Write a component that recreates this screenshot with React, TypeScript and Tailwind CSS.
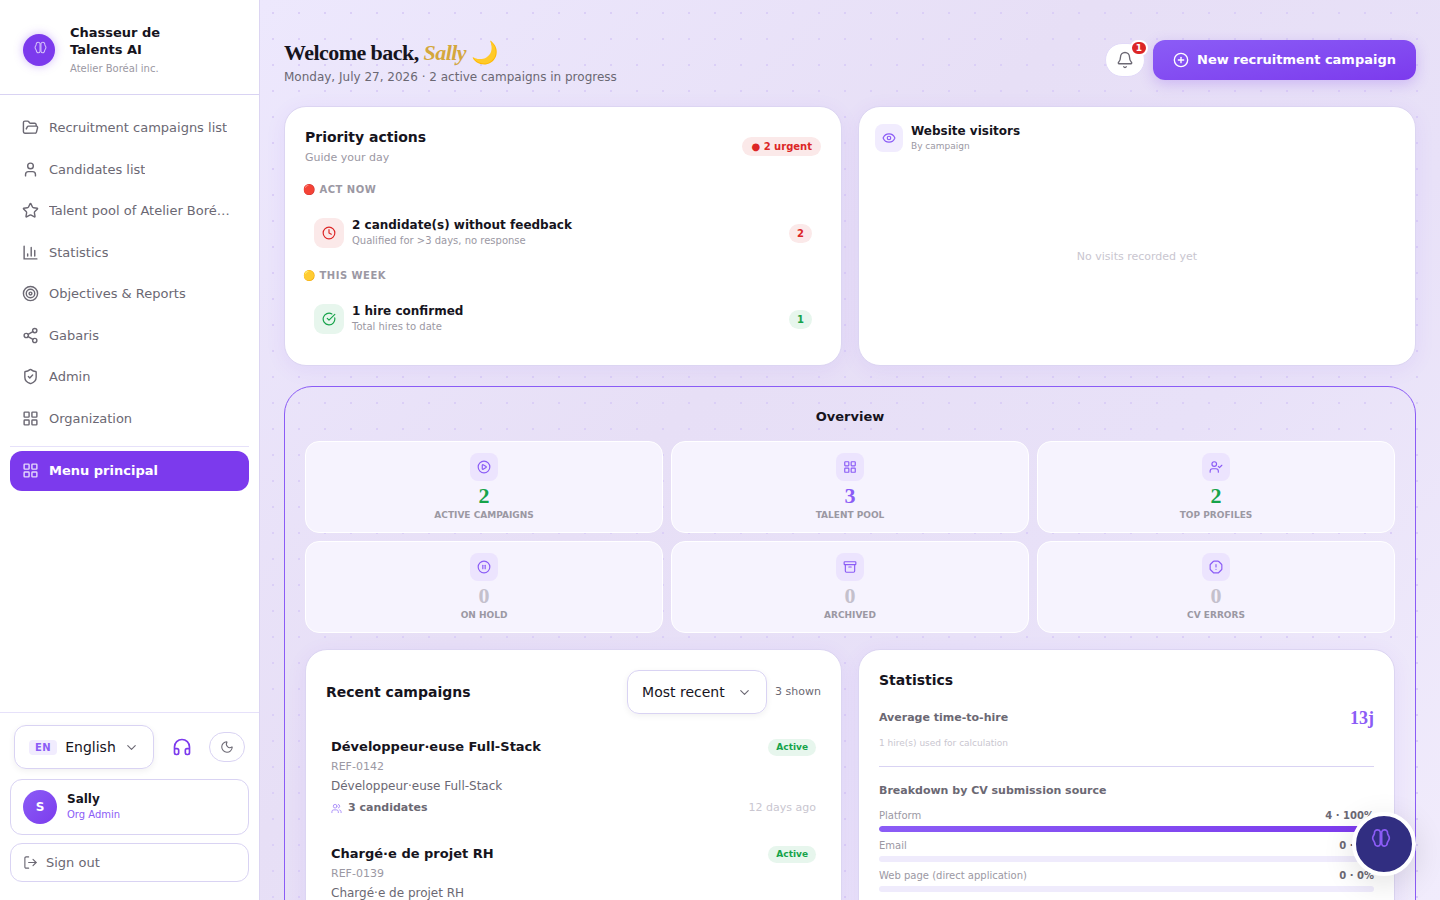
import {
  Archive,
  Bell,
  ChevronDown,
  CircleCheckBig,
  CirclePause,
  CirclePlay,
  CirclePlus,
  Clock,
  Eye,
  FolderOpen,
  Headphones,
  LayoutGrid,
  LogOut,
  Moon,
  OctagonAlert,
  Share2,
  ShieldCheck,
  Star,
  Target,
  User,
  Users,
} from 'lucide-react'
import type { ComponentType } from 'react'

type IconProps = { size?: number; strokeWidth?: number; className?: string }
type Icon = ComponentType<IconProps>

function BrainIcon({ size = 24, strokeWidth = 2, className }: IconProps) {
  return (
    <svg width={size} height={size} viewBox="0 0 24 24" fill="none" stroke="currentColor" strokeWidth={strokeWidth} strokeLinecap="round" strokeLinejoin="round" className={className} aria-hidden="true">
      <path d="M11.2 4.6C10.6 3.1 9.3 2.3 7.6 2.3 5.5 2.3 4 3.8 4.2 5.8 4.6 7.8 2 9.5 2 12s2 4 2.3 5.4C4.5 20 6 21.7 8 21.7c1.7 0 2.8-1.1 3.2-2.7Z" />
      <path d="M12.8 4.6c.6-1.5 1.9-2.3 3.6-2.3 2.1 0 3.6 1.5 3.4 3.5C19.4 7.8 22 9.5 22 12s-2 4-2.3 5.4c-.2 2.6-1.7 4.3-3.7 4.3-1.7 0-2.8-1.1-3.2-2.7Z" />
    </svg>
  )
}

function BarsIcon({ size = 24, strokeWidth = 2, className }: IconProps) {
  return (
    <svg width={size} height={size} viewBox="0 0 24 24" fill="none" stroke="currentColor" strokeWidth={strokeWidth} strokeLinecap="round" className={className} aria-hidden="true">
      <path d="M3 3v18h18M18 17V9M13 17V5M8 17v-3" />
    </svg>
  )
}

function UserTickIcon({ size = 24, strokeWidth = 2, className }: IconProps) {
  return (
    <svg width={size} height={size} viewBox="0 0 24 24" fill="none" stroke="currentColor" strokeWidth={strokeWidth} strokeLinecap="round" strokeLinejoin="round" className={className} aria-hidden="true">
      <path d="M16 21v-2a4 4 0 0 0-4-4H6a4 4 0 0 0-4 4v2" />
      <circle cx="9" cy="7" r="4" />
      <path d="m16 11 2 2 4-4" />
    </svg>
  )
}

const NAV: { label: string; icon: Icon }[] = [
  { label: 'Recruitment campaigns list', icon: FolderOpen },
  { label: 'Candidates list', icon: User },
  { label: 'Talent pool of Atelier Boréal inc.', icon: Star },
  { label: 'Statistics', icon: BarsIcon },
  { label: 'Objectives & Reports', icon: Target },
  { label: 'Gabaris', icon: Share2 },
  { label: 'Admin', icon: ShieldCheck },
  { label: 'Organization', icon: LayoutGrid },
]

const ACTIONS: { heading: string; dot: string; title: string; note: string; count: number; icon: Icon; tone: string }[] = [
  { heading: 'Act now', dot: '🔴', title: '2 candidate(s) without feedback', note: 'Qualified for >3 days, no response', count: 2, icon: Clock, tone: 'bg-[#fbe9e9] text-[#dc2626]' },
  { heading: 'This week', dot: '🟡', title: '1 hire confirmed', note: 'Total hires to date', count: 1, icon: CircleCheckBig, tone: 'bg-[#e7f6ed] text-[#16a34a]' },
]

const STATS: { label: string; value: number; icon: Icon; color: string }[] = [
  { label: 'Active campaigns', value: 2, icon: CirclePlay, color: 'text-[#16a34a]' },
  { label: 'Talent pool', value: 3, icon: LayoutGrid, color: 'text-[#8b5cf6]' },
  { label: 'Top profiles', value: 2, icon: UserTickIcon, color: 'text-[#16a34a]' },
  { label: 'On hold', value: 0, icon: CirclePause, color: 'text-[#c4c0cc]' },
  { label: 'Archived', value: 0, icon: Archive, color: 'text-[#c4c0cc]' },
  { label: 'CV errors', value: 0, icon: OctagonAlert, color: 'text-[#c4c0cc]' },
]

const CAMPAIGNS = [
  { title: 'Développeur·euse Full-Stack', ref: 'REF-0142', candidates: 3, age: '12 days ago' },
  { title: 'Chargé·e de projet RH', ref: 'REF-0139', candidates: 1, age: '18 days ago' },
]

const SOURCES = [
  { label: 'Platform', count: 4, percent: 100 },
  { label: 'Email', count: 0, percent: 0 },
  { label: 'Web page (direct application)', count: 0, percent: 0 },
]

const CARD = 'rounded-[22px] border border-[#dcd5f2] bg-white shadow-[0_4px_20px_rgba(124,58,237,0.08)]'

function Sidebar() {
  return (
    <aside className="flex w-[260px] shrink-0 flex-col border-r border-[#dcd5f2] bg-white">
      <div className="flex items-center gap-[15px] border-b border-[#d9d3f3] pt-6 pr-4 pb-[18px] pl-[23px]">
        <span className="flex size-8 shrink-0 items-start justify-center rounded-full bg-[#7c3aed] pt-[7px] pl-[3px] text-[#d3bffa] shadow-[0_0_10px_rgba(124,58,237,0.35)]">
          <BrainIcon size={13} strokeWidth={2} />
        </span>
        <div className="w-28">
          <p className="text-[13px] leading-[17px] font-bold">Chasseur de Talents AI</p>
          <p className="mt-[3px] text-[10px] leading-[15px] text-[#9b98a3]">Atelier Boréal inc.</p>
        </div>
      </div>

      <nav className="flex flex-col gap-0.5 px-2.5 pt-[13px] text-[13px] leading-normal text-[#6b6873]">
        {NAV.map(({ label, icon: NavIcon }) => (
          <a key={label} href="#" className="flex items-center gap-2.5 rounded-xl py-2.5 pr-4 pl-3">
            <NavIcon size={17} strokeWidth={2} className="shrink-0" />
            <span className="truncate">{label}</span>
          </a>
        ))}
        <div className="mt-1.5 border-t border-[#e6e1fa] pt-1">
          <a href="#" className="flex items-center gap-2.5 rounded-xl bg-[#7c3aed] px-3 py-2.5 font-bold text-white">
            <LayoutGrid size={17} strokeWidth={2} className="shrink-0 text-[#e4d8fc]" />
            Menu principal
          </a>
        </div>
      </nav>

      <div className="mt-auto border-t border-[#e6e1fa] px-2.5 pt-3 pb-[18px]">
        <div className="flex items-center justify-between px-1">
          <label className="relative flex h-11 w-[140px] items-center rounded-xl border border-[#d9d3f3] shadow-[0_2px_6px_rgba(0,0,0,0.06)]">
            <span className="ml-3.5 rounded bg-[#f1ecfe] px-1.5 text-[10px] leading-[15px] font-bold tracking-wider text-[#8b5cf6]">EN</span>
            <select aria-label="Language" className="ml-2 h-full flex-1 appearance-none bg-transparent text-sm outline-none">
              <option>English</option>
            </select>
            <ChevronDown size={15} strokeWidth={1.8} className="pointer-events-none absolute right-3.5 text-[#6b6873]" />
          </label>
          <button type="button" aria-label="Support" className="text-[#7c3aed]">
            <Headphones size={20} />
          </button>
          <button type="button" aria-label="Dark mode" className="flex h-[30px] w-9 items-center justify-center rounded-full border border-[#d9d3f3] text-[#6b6873]">
            <Moon size={14} strokeWidth={1.8} />
          </button>
        </div>

        <div className="mt-2.5 flex h-14 items-center gap-2.5 rounded-xl border border-[#d9d3f3] px-3">
          <span className="flex size-[34px] items-center justify-center rounded-full bg-linear-to-br from-[#8b5cf6] to-[#7c3aed] text-xs font-bold text-white">S</span>
          <div>
            <p className="text-xs leading-4 font-bold">Sally</p>
            <p className="text-[10px] leading-4 text-[#8b5cf6]">Org Admin</p>
          </div>
        </div>
        <button type="button" className="mt-2 flex w-full items-center gap-2 rounded-xl border border-[#d9d3f3] px-3 py-[9px] text-[13px] leading-[19px] text-[#6b6873]">
          <LogOut size={15} strokeWidth={1.8} />
          Sign out
        </button>
      </div>
    </aside>
  )
}

function PriorityActions() {
  return (
    <section className={`${CARD} px-5 pt-5 pb-[23px]`}>
      <div className="flex items-center justify-between">
        <div>
          <h2 className="text-sm leading-5 font-bold">Priority actions</h2>
          <p className="mt-[3px] text-[11px] leading-4 text-[#9b98a3]">Guide your day</p>
        </div>
        <span className="rounded-full bg-[#fbe9e9] px-[9px] text-[10px] leading-[19px] font-bold text-[#dc2626]">● 2 urgent</span>
      </div>
      <div className="mt-4 flex flex-col gap-3">
        {ACTIONS.map(({ heading, dot, title, note, count, icon: ActionIcon, tone }) => (
          <div key={heading}>
            <h3 className="-ml-0.5 text-[10px] leading-4 font-bold tracking-wider text-[#9b98a3] uppercase">
              {dot} {heading}
            </h3>
            <div className="mt-3 flex items-center gap-2 px-[9px] py-[7px]">
              <span className={`flex size-[30px] items-center justify-center rounded-[9px] ${tone}`}>
                <ActionIcon size={14} />
              </span>
              <div className="flex-1">
                <p className="text-xs leading-4 font-bold">{title}</p>
                <p className="text-[10px] leading-4 text-[#9b98a3]">{note}</p>
              </div>
              <span className={`rounded-full px-2 text-[10px] leading-[19px] font-bold ${tone}`}>{count}</span>
            </div>
          </div>
        ))}
      </div>
    </section>
  )
}

function WebsiteVisitors() {
  return (
    <section className={`${CARD} flex flex-col p-4`}>
      <div className="flex items-center gap-2">
        <span className="flex size-7 items-center justify-center rounded-lg bg-[#f1ecfe] text-[#8b5cf6]">
          <Eye size={14} />
        </span>
        <div>
          <h2 className="text-xs leading-4 font-bold">Website visitors</h2>
          <p className="text-[9px] leading-[14px] text-[#9b98a3]">By campaign</p>
        </div>
      </div>
      <p className="flex flex-1 items-center justify-center pt-3 text-[11px] leading-4 text-[#c9c6d0]">No visits recorded yet</p>
    </section>
  )
}

function RecentCampaigns() {
  return (
    <section className={`${CARD} p-5`}>
      <div className="flex items-center gap-2">
        <h2 className="flex-1 text-sm font-bold">Recent campaigns</h2>
        <div className="relative flex h-11 w-[140px] items-center rounded-xl border border-[#d9d3f3] shadow-[0_2px_6px_rgba(0,0,0,0.06)]">
          <select aria-label="Sort campaigns" className="h-full w-full appearance-none bg-transparent pl-3.5 text-sm outline-none">
            <option>Most recent</option>
          </select>
          <ChevronDown size={15} strokeWidth={1.8} className="pointer-events-none absolute right-3.5 text-[#6b6873]" />
        </div>
        <span className="text-[11px] text-[#6b6873]">3 shown</span>
      </div>
      <div className="mt-6 flex flex-col gap-[29px] px-[5px]">
        {CAMPAIGNS.map(c => (
          <article key={c.ref}>
            <div className="flex items-center justify-between">
              <h3 className="text-[13px] leading-[18px] font-bold">{c.title}</h3>
              <span className="rounded-full bg-[#e7f6ed] px-2 text-[9px] leading-[17px] font-bold text-[#16a34a]">Active</span>
            </div>
            <p className="mt-1 text-[11px] leading-[14px] text-[#9b98a3]">{c.ref}</p>
            <p className="mt-1 text-xs leading-4 text-[#6b6873]">{c.title}</p>
            <div className="mt-1.5 flex items-center justify-between text-[11px] leading-4">
              <span className="flex items-center gap-1.5 font-bold text-[#6b6873]">
                <Users size={11} className="text-[#a78bfa]" />
                {c.candidates} candidates
              </span>
              <span className="text-[#c9c6d0]">{c.age}</span>
            </div>
          </article>
        ))}
      </div>
    </section>
  )
}

function Statistics() {
  return (
    <section className={`${CARD} p-5`}>
      <h2 className="text-sm leading-5 font-bold">Statistics</h2>
      <div className="mt-4 flex items-center justify-between">
        <h3 className="text-[11px] font-bold text-[#6b6873]">Average time-to-hire</h3>
        <span className="font-['Liberation_Serif',serif] text-lg leading-6 font-bold text-[#8b5cf6]">13j</span>
      </div>
      <p className="mt-1.5 text-[9px] leading-[14px] text-[#c9c6d0]">1 hire(s) used for calculation</p>
      <div className="mt-4 border-t border-[#d9d3f3] pt-4">
        <h3 className="text-[11px] leading-4 font-bold text-[#6b6873]">Breakdown by CV submission source</h3>
        <div className="mt-2.5 flex flex-col gap-[7px]">
          {SOURCES.map(s => (
            <div key={s.label}>
              <div className="flex justify-between text-[10px] leading-[14px]">
                <span className="text-[#9b98a3]">{s.label}</span>
                <span className="font-bold text-[#6b6873]">
                  {s.count} · {s.percent}%
                </span>
              </div>
              <div className="mt-[3px] h-1.5 overflow-hidden rounded-full bg-[#efebfc]">
                <div className="h-full rounded-full bg-linear-to-r from-[#8b5cf6] to-[#7c3aed]" style={{ width: `${s.percent}%` }} />
              </div>
            </div>
          ))}
        </div>
      </div>
    </section>
  )
}

export default function App() {
  return (
    <div className="flex h-screen overflow-hidden font-['DejaVu_Sans',sans-serif] text-[#16141d]">
      <Sidebar />

      <main className="min-w-0 flex-1 overflow-y-auto bg-[radial-gradient(circle,#dbcff7_1px,transparent_1px),linear-gradient(135deg,#ede8fd_0%,#e7dff6_40%,#e8e1f8_65%,#f1ecfc_100%)] bg-[size:26px_26px,100%_100%] px-6 pt-10 pb-8 [scrollbar-width:none]">
        <header className="mb-5 flex items-start justify-between">
          <div>
            <h1 className="font-['Liberation_Serif',serif] text-[22px] leading-[26px] font-bold tracking-tight">
              Welcome back, <em className="text-[#d4a73c]">Sally</em> 🌙
            </h1>
            <p className="mt-0.5 text-xs leading-[18px] text-[#6b6873]">Monday, July 27, 2026 · 2 active campaigns in progress</p>
          </div>
          <div className="flex items-center gap-2">
            <button type="button" aria-label="Notifications" className="relative flex h-[34px] w-10 items-center justify-center rounded-full border border-[#e2daf8] bg-white text-[#6b6873]">
              <Bell size={18} strokeWidth={1.8} />
              <span className="absolute -top-1 -right-1 rounded-full border-2 border-white bg-[#dc2626] px-1 text-[9px] leading-3 font-bold text-white">1</span>
            </button>
            <button type="button" className="flex h-10 items-center gap-2 rounded-xl bg-linear-to-br from-[#8b5cf6] to-[#7c3aed] px-5 text-[13px] font-bold text-white shadow-[0_4px_14px_rgba(124,58,237,0.25)]">
              <CirclePlus size={16} />
              New recruitment campaign
            </button>
          </div>
        </header>

        <div className="mb-5 grid grid-cols-2 gap-4">
          <PriorityActions />
          <WebsiteVisitors />
        </div>

        <section className="rounded-[28px] border border-[#8b5cf6] p-5">
          <h2 className="mb-3.5 text-center text-[13px] leading-5 font-bold">Overview</h2>
          <div className="grid grid-cols-3 gap-2">
            {STATS.map(({ label, value, icon: StatIcon, color }) => (
              <div key={label} className="flex flex-col items-center rounded-[14px] border border-white bg-[#f6f3fe] py-[11px]">
                <span className="flex size-7 items-center justify-center rounded-lg bg-[#ece4fe] text-[#8b5cf6]">
                  <StatIcon size={14} />
                </span>
                <span className={`mt-1 font-['Liberation_Serif',serif] text-[22px] leading-[22px] font-bold ${color}`}>{value}</span>
                <span className="mt-0.5 text-[9px] leading-3 font-bold text-[#9b98a3] uppercase">{label}</span>
              </div>
            ))}
          </div>
          <div className="mt-4 grid grid-cols-2 gap-4">
            <RecentCampaigns />
            <Statistics />
          </div>
        </section>
      </main>

      <button type="button" aria-label="Open assistant" className="fixed right-6 bottom-6 flex size-16 items-start justify-center rounded-full border-4 border-white bg-[#312e81] pt-3 pr-1.5 text-[#8b5cf6] shadow-[0_8px_32px_rgba(0,0,0,0.12)]">
        <BrainIcon size={20} strokeWidth={2} />
      </button>
    </div>
  )
}
